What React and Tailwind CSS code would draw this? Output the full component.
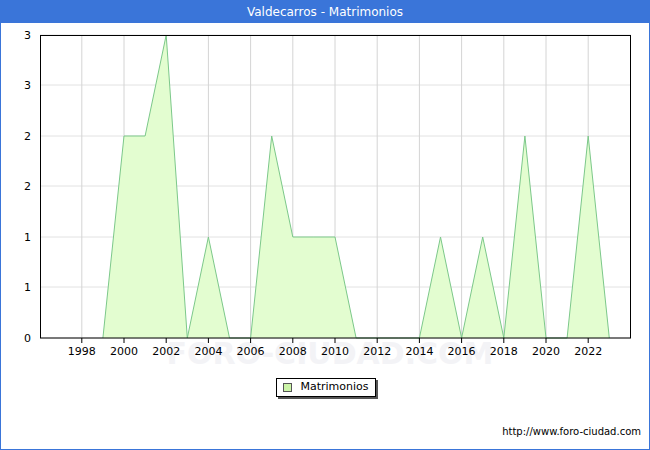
const data = [[1999,0],[2000,2],[2001,2],[2002,3],[2003,0],[2004,1],[2005,0],[2006,0],[2007,2],[2008,1],[2009,1],[2010,1],[2011,0],[2012,0],[2013,0],[2014,0],[2015,1],[2016,0],[2017,1],[2018,0],[2019,2],[2020,0],[2021,0],[2022,2],[2023,0]];
const X = (y) => 124 + (y - 2000) * 21.1;
const Y = (v) => 338 - v * 101;

const Chart = () => {
  const pts = data.map(([yr, v]) => `${X(yr)},${Y(v)}`).join(" ");
  const area = `${X(1999)},338 ${pts} ${X(2023)},338`;
  const yTicks = [[338,"0"],[287,"1"],[237,"1"],[186,"2"],[136,"2"],[85,"3"],[35,"3"]];
  const years = [1998,2000,2002,2004,2006,2008,2010,2012,2014,2016,2018,2020,2022];
  return (
    <svg width="648" height="345" className="block" style={{ fontFamily: "'DejaVu Sans', sans-serif" }}>
      <g transform="translate(-1,-23)">
        <text x="330" y="364" fontSize="30" fill="#f3f3f6" textAnchor="middle" fontWeight="bold">FORO-CIUDAD.COM</text>
        {yTicks.map(([y]) => <line key={y} x1="40" x2="631" y1={y} y2={y} stroke="#e2e2e2" />)}
        {years.map((yr) => <line key={yr} x1={X(yr)} x2={X(yr)} y1="35" y2="338" stroke="#d4d4d4" />)}
        <polygon points={area} fill="#e3fdd0" />
        <polyline points={pts} fill="none" stroke="#7cc88a" strokeWidth="1" />
        <rect x="40.5" y="35.5" width="590" height="302.5" fill="none" stroke="#000" />
        {yTicks.map(([y, t]) => <text key={y} x="31" y={y + 4} fontSize="11" textAnchor="end" fill="#000">{t}</text>)}
        {years.map((yr) => <line key={yr} x1={X(yr)} x2={X(yr)} y1="338" y2="343" stroke="#000" />)}
        {years.map((yr) => <text key={yr} x={X(yr)} y="355" fontSize="11" textAnchor="middle" fill="#000">{yr}</text>)}
      </g>
    </svg>
  );
};

export default function App() {
  return (
    <div className="w-[650px] h-[450px] border border-[#3a75d9] bg-white flex flex-col" style={{ fontFamily: "'DejaVu Sans', Verdana, sans-serif" }}>
      <div className="h-[22px] bg-[#3a75d9] text-white text-[12px] flex items-center justify-center">Valdecarros - Matrimonios</div>
      <Chart />
      <div className="flex justify-center mt-[10px] ml-[2px]">
        <div className="flex items-center gap-[8px] border border-black bg-white px-[6px] h-[19px] text-[11px] shadow-[2px_2px_0_#555]">
          <span className="w-[9px] h-[9px] border border-[#555] bg-[#ccf5a8]" />
          <span>Matrimonios</span>
        </div>
      </div>
      <div className="flex-1" />
      <div className="text-right text-[10px] pr-[8px] pb-[10px]">http://www.foro-ciudad.com</div>
    </div>
  );
}
